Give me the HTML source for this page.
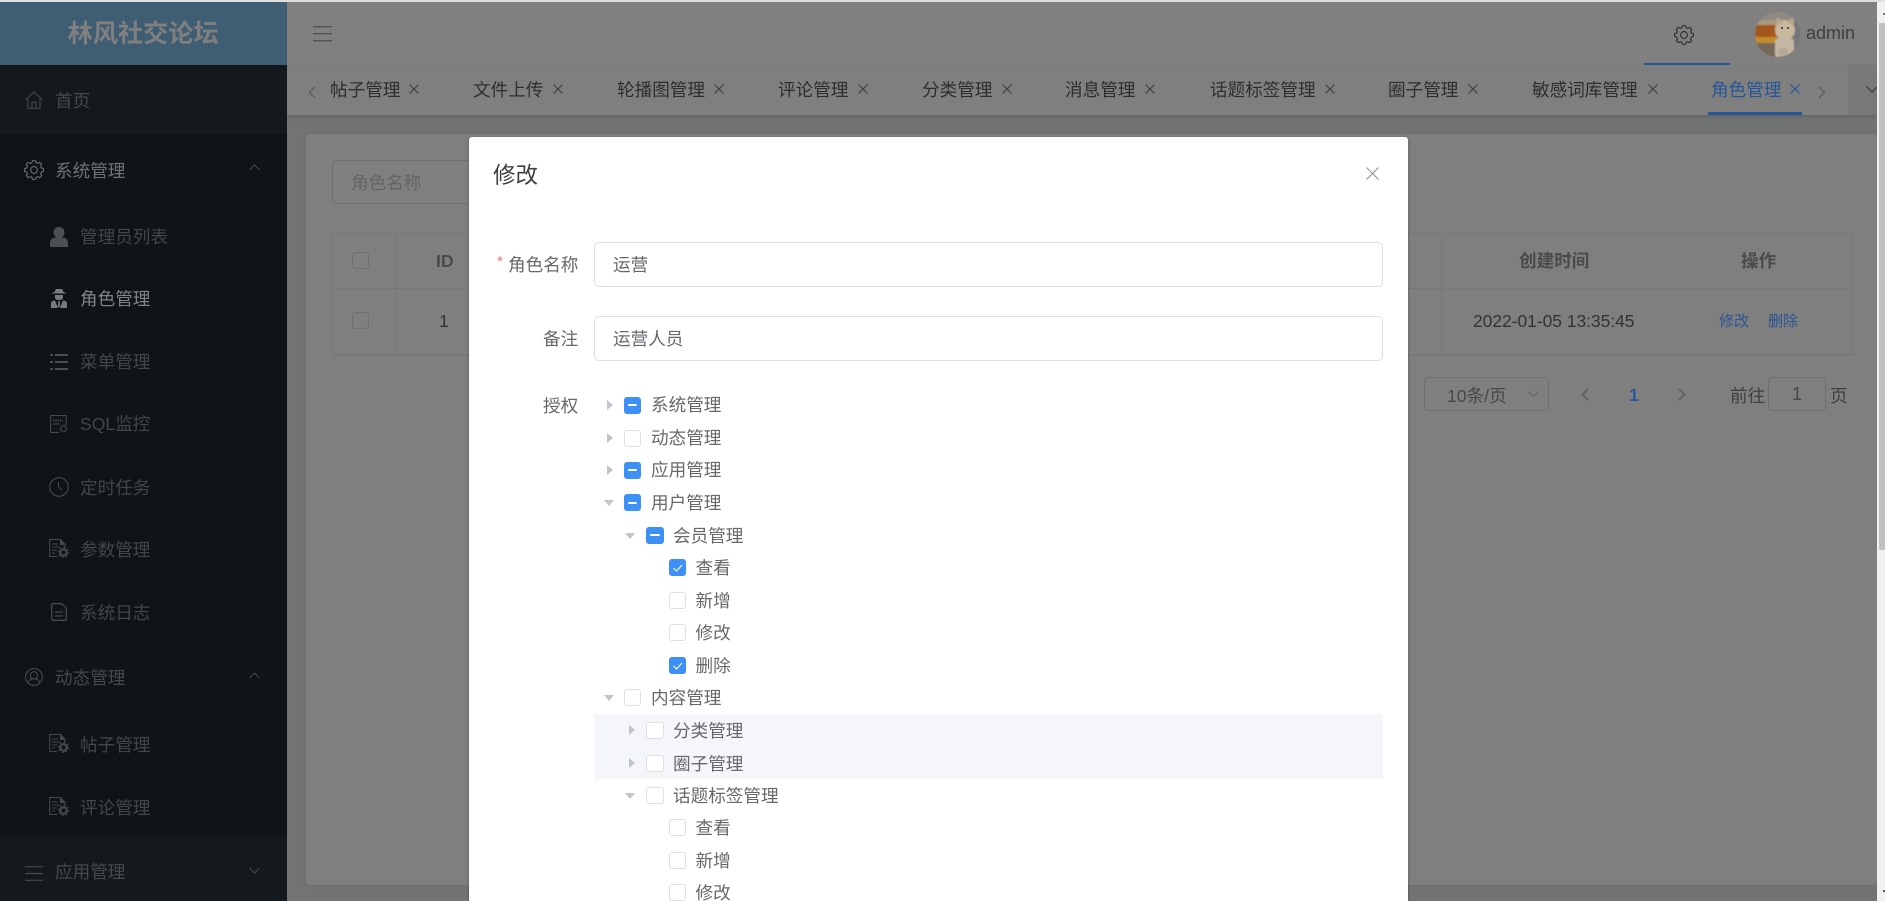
<!DOCTYPE html>
<html lang="zh"><head><meta charset="utf-8"><title>角色管理</title>
<style>
html,body{margin:0;padding:0;width:1885px;height:901px;overflow:hidden;background:#7f7f7f}
body{position:relative;font-family:"Liberation Sans","Noto Sans CJK SC",sans-serif;font-size:17.6px}
.a{position:absolute;box-sizing:border-box}
.t{position:absolute;white-space:nowrap;line-height:24px;height:24px;margin-top:-11px}
svg{position:absolute;overflow:visible}
.m{color:#44494d}
.n{color:#40464a}
.tab{color:#2e2e2e;font-size:17.6px}
.x{stroke:#3d3d3d;stroke-width:1.1;fill:none}
.r{color:#66686c}
.cb{position:absolute;box-sizing:border-box;width:17px;height:17px;background:#fff;border:1.2px solid #dcdfe6;border-radius:3px;margin-top:-8.5px}
.cb.i{background:#3e90f7;border-color:#3e90f7}
.cb.i:after{content:"";position:absolute;left:3px;right:3px;top:6.5px;height:2px;background:#fff;border-radius:1px}
.cb.c{background:#3e90f7;border-color:#3e90f7}
.tr{position:absolute;width:0;height:0;border-left:6px solid #c0c4cc;border-top:5px solid transparent;border-bottom:5px solid transparent;margin-top:-5px}
.td{position:absolute;width:0;height:0;border-top:6px solid #c0c4cc;border-left:5px solid transparent;border-right:5px solid transparent;margin-top:-2px}
</style></head><body>
<svg width="0" height="0" style="position:absolute">
<defs>
<symbol id="docgear" viewBox="0 0 20 19"><path d="M16 9V5.5L11.5.5H.7v17H8" fill="none" stroke="#44494d" stroke-width="1.1"/><path d="M11 .5V6h5z" fill="#44494d"/><path d="M3 5h6M3 8h8M3 11h5M3 14h3" stroke="#44494d" stroke-width="1.1"/><circle cx="14.5" cy="13.5" r="3.2" fill="none" stroke="#44494d" stroke-width="2.2"/><circle cx="14.5" cy="13.5" r="5" fill="none" stroke="#44494d" stroke-width="1.4" stroke-dasharray="1.8 2.1"/></symbol>
<symbol id="gear" viewBox="0 0 20 20"><g transform="translate(10,10)" fill="none" stroke="currentColor" stroke-width="1.1" stroke-linejoin="round"><path d="M9.38 -1.49L9.38 1.49L7.31 2.09L6.65 3.68L7.69 5.58L5.58 7.69L3.68 6.65L2.09 7.31L1.49 9.38L-1.49 9.38L-2.09 7.31L-3.68 6.65L-5.58 7.69L-7.69 5.58L-6.65 3.68L-7.31 2.09L-9.38 1.49L-9.38 -1.49L-7.31 -2.09L-6.65 -3.68L-7.69 -5.58L-5.58 -7.69L-3.68 -6.65L-2.09 -7.31L-1.49 -9.38L1.49 -9.38L2.09 -7.31L3.68 -6.65L5.58 -7.69L7.69 -5.58L6.65 -3.68L7.31 -2.09Z"/><circle r="3.4"/></g></symbol>
</defs></svg>

<!-- top strip -->
<div class="a" style="left:0;top:0;width:1885px;height:2px;background:#dedede"></div>
<!-- header -->
<div class="a" style="left:287px;top:2px;width:1590px;height:63px;background:#808080"></div>
<svg style="left:313px;top:26px" width="20" height="16"><path d="M0 .7h19M0 7.7h19M0 14.7h19" stroke="#525252" stroke-width="1.4"/></svg>
<svg style="left:1674px;top:25px;color:#2c2c2c" width="20" height="20"><use href="#gear" width="20" height="20"/></svg>
<div class="a" style="left:1644px;top:63px;width:86px;height:2px;background:#26559a"></div>
<svg style="left:1755px;top:12px" width="45" height="45" viewBox="0 0 45 45"><defs><clipPath id="av"><circle cx="22.5" cy="22.5" r="22.5"/></clipPath><filter id="bl"><feGaussianBlur stdDeviation="0.7"/></filter></defs><g clip-path="url(#av)"><g filter="url(#bl)"><rect x="-2" y="-2" width="49" height="49" fill="#8a8072"/><rect x="0" y="0" width="45" height="9" fill="#8d8a84"/><rect x="38" y="6" width="9" height="32" fill="#72767c"/><rect x="0" y="8" width="22" height="5" fill="#a99a7c"/><rect x="0" y="13" width="22" height="12" fill="#a5561b"/><rect x="0" y="25" width="22" height="6" fill="#c28c2a"/><rect x="0" y="31" width="22" height="14" fill="#75695a"/><ellipse cx="30" cy="18" rx="10" ry="10" fill="#c8b8a0"/><path d="M20 14l2-9 6 5zM32 10l7-5 0 10z" fill="#bfa688"/><path d="M20 45V28c2-3 16-3 19 0v17z" fill="#c4b6a2"/><ellipse cx="28" cy="40" rx="5" ry="4" fill="#b2a896"/></g><circle cx="27" cy="16" r="1" fill="#333"/><circle cx="33" cy="16" r="1" fill="#333"/></g></svg>
<div class="t" style="left:1806px;top:32px;font-size:18px;color:#3f3f3f">admin</div>

<!-- content bg -->
<div class="a" style="left:287px;top:115px;width:1590px;height:786px;background:#717473"></div>
<div class="a" style="left:306px;top:134px;width:1571px;height:751px;background:#7f7f7f;border-radius:4px;box-shadow:0 0 6px rgba(0,0,0,.05)"></div>

<!-- tabs -->
<div class="a" style="left:287px;top:65px;width:1590px;height:50px;background:#7f7f7f;box-shadow:0 2px 4px rgba(0,0,0,.14)"></div>
<div class="a" style="left:1848px;top:65px;width:29px;height:50px;background:#767879"></div>
<svg style="left:308px;top:86px" width="8" height="13"><path d="M7 1L1.5 6.5 7 12" class="x" style="stroke:#555"/></svg>
<div class="t tab" style="left:330px;top:89px">帖子管理</div>
<svg style="left:409px;top:84px" width="10" height="10"><path d="M.5.5l9 9M9.5.5l-9 9" class="x"/></svg>
<div class="t tab" style="left:473px;top:89px">文件上传</div>
<svg style="left:553px;top:84px" width="10" height="10"><path d="M.5.5l9 9M9.5.5l-9 9" class="x"/></svg>
<div class="t tab" style="left:617px;top:89px">轮播图管理</div>
<svg style="left:714px;top:84px" width="10" height="10"><path d="M.5.5l9 9M9.5.5l-9 9" class="x"/></svg>
<div class="t tab" style="left:778px;top:89px">评论管理</div>
<svg style="left:858px;top:84px" width="10" height="10"><path d="M.5.5l9 9M9.5.5l-9 9" class="x"/></svg>
<div class="t tab" style="left:922px;top:89px">分类管理</div>
<svg style="left:1002px;top:84px" width="10" height="10"><path d="M.5.5l9 9M9.5.5l-9 9" class="x"/></svg>
<div class="t tab" style="left:1065px;top:89px">消息管理</div>
<svg style="left:1145px;top:84px" width="10" height="10"><path d="M.5.5l9 9M9.5.5l-9 9" class="x"/></svg>
<div class="t tab" style="left:1210px;top:89px">话题标签管理</div>
<svg style="left:1325px;top:84px" width="10" height="10"><path d="M.5.5l9 9M9.5.5l-9 9" class="x"/></svg>
<div class="t tab" style="left:1388px;top:89px">圈子管理</div>
<svg style="left:1468px;top:84px" width="10" height="10"><path d="M.5.5l9 9M9.5.5l-9 9" class="x"/></svg>
<div class="t tab" style="left:1532px;top:89px">敏感词库管理</div>
<svg style="left:1648px;top:84px" width="10" height="10"><path d="M.5.5l9 9M9.5.5l-9 9" class="x"/></svg>
<div class="t tab" style="left:1711px;top:89px;color:#26559a">角色管理</div>
<svg style="left:1790px;top:84px" width="10" height="10"><path d="M.5.5l9 9M9.5.5l-9 9" class="x" style="stroke:#26559a"/></svg>
<div class="a" style="left:1708px;top:112px;width:94px;height:3px;background:#26559a"></div>
<svg style="left:1818px;top:86px" width="8" height="13"><path d="M1 1l5.5 5.5L1 12" class="x" style="stroke:#555"/></svg>
<svg style="left:1866px;top:86px" width="11" height="8"><path d="M.5.5L6 6l5-5" class="x" style="stroke:#333"/></svg>

<!-- search -->
<div class="a" style="left:332px;top:160px;width:160px;height:44px;border:1px solid #6e7072;border-radius:5px"></div>
<div class="t" style="left:351px;top:182px;color:#646464">角色名称</div>

<!-- table -->
<div class="a" style="left:332px;top:233px;width:1521px;height:123px;border:1px solid #76787c;border-bottom-width:2px"></div>
<div class="a" style="left:332px;top:288px;width:1521px;height:1px;background:#76787c"></div>
<div class="a" style="left:395px;top:233px;width:1px;height:122px;background:#76787c"></div>
<div class="a" style="left:1441px;top:233px;width:1px;height:122px;background:#76787c"></div>
<div class="a" style="left:352px;top:252px;width:17px;height:17px;border:1px solid #6e7072;border-radius:3px"></div>
<div class="a" style="left:352px;top:312px;width:17px;height:17px;border:1px solid #6e7072;border-radius:3px"></div>
<div class="t" style="left:436px;top:260px;font-weight:bold;color:#4a4a4a">ID</div>
<div class="t" style="left:439px;top:320px;color:#333">1</div>
<div class="t" style="left:1519px;top:260px;font-weight:bold;color:#4a4a4a">创建时间</div>
<div class="t" style="left:1741px;top:260px;font-weight:bold;color:#4a4a4a">操作</div>
<div class="t" style="left:1473px;top:320px;color:#333;font-size:17.4px">2022-01-05 13:35:45</div>
<div class="t" style="left:1719px;top:321px;font-size:15px;color:#2b5494">修改</div>
<div class="t" style="left:1768px;top:321px;font-size:15px;color:#2b5494">删除</div>

<!-- pagination -->
<div class="a" style="left:1424px;top:377px;width:125px;height:34px;border:1px solid #6e7072;border-radius:4px"></div>
<div class="t" style="left:1447px;top:395px;color:#484848">10条/页</div>
<svg style="left:1528px;top:391px" width="11" height="7"><path d="M.5.5L5.5 5.5 10.5 .5" class="x" style="stroke:#666"/></svg>
<svg style="left:1581px;top:388px" width="8" height="13"><path d="M7 1L1.5 6.5 7 12" fill="none" stroke="#5e5e5e" stroke-width="1.6"/></svg>
<div class="t" style="left:1629px;top:394px;font-weight:bold;color:#26559a">1</div>
<svg style="left:1678px;top:388px" width="8" height="13"><path d="M1 1l5.5 5.5L1 12" fill="none" stroke="#5e5e5e" stroke-width="1.6"/></svg>
<div class="t" style="left:1730px;top:395px;color:#3f3f3f">前往</div>
<div class="a" style="left:1768px;top:377px;width:58px;height:34px;border:1px solid #6e7072;border-radius:4px"></div>
<div class="t" style="left:1792px;top:393px;color:#484848;font-size:18px">1</div>
<div class="t" style="left:1830px;top:395px;color:#3f3f3f">页</div>

<!-- sidebar -->
<div class="a" style="left:0;top:2px;width:287px;height:63px;background:#3f5d73"></div>
<div class="t" style="left:67.5px;top:33px;font-size:25.2px;font-weight:bold;color:#7f7f7f">林风社交论坛</div>
<div class="a" style="left:0;top:65px;width:287px;height:836px;background:#0e1417"></div>
<div class="a" style="left:0;top:65px;width:287px;height:69px;background:#13191d"></div>
<div class="a" style="left:0;top:837px;width:287px;height:64px;background:#13191d"></div>

<svg style="left:25px;top:91px" width="18" height="18" viewBox="0 0 18 18"><path d="M.5 9L9 1l8.5 8M3 7.5V17.3h12V7.5M7 17.3v-6h4v6" fill="none" stroke="#44494d" stroke-width="1.1"/></svg>
<div class="t m" style="left:55px;top:100px">首页</div>

<svg style="left:24px;top:160px;color:#6a6f73" width="20" height="20"><use href="#gear" width="20" height="20"/></svg>
<div class="t" style="left:55px;top:170px;color:#6c7276">系统管理</div>
<svg style="left:249px;top:164px" width="11" height="7"><path d="M.5 6L5.5 1l5 5" fill="none" stroke="#44494d" stroke-width="1"/></svg>

<svg style="left:50px;top:227px" width="18" height="20" viewBox="0 0 18 20"><circle cx="9" cy="5.5" r="5.5" fill="#4b5054"/><path d="M0 20v-4.5C0 12.5 3 10.5 5 10.5h8c2 0 5 2 5 5V20z" fill="#4b5054"/></svg>
<div class="t n" style="left:80px;top:236px">管理员列表</div>

<svg style="left:51px;top:289px" width="16" height="19" viewBox="0 0 16 19"><path d="M3.5 3L5 0h6l1.5 3L16 4.5H0z" fill="#787c80"/><path d="M4 6h8v2.5C12 10.500 10 11 8 11s-4-.5-4-2.500z" fill="#787c80"/><path d="M0 19v-4.500C0 12.500 2 11.500 4 11.500l3 7.500h2l3-7.500c2 0 4 1 4 3V19z" fill="#787c80"/><path d="M7.300 12h1.400l.5 6H6.800z" fill="#787c80"/></svg>
<div class="t" style="left:80px;top:298px;color:#7f8488">角色管理</div>

<svg style="left:50px;top:354px" width="18" height="16" viewBox="0 0 18 16"><path d="M0 1h3M5 1h13M0 8h3M5 8h13M0 15h3M5 15h13" stroke="#4b5054" stroke-width="2"/></svg>
<div class="t n" style="left:80px;top:361px">菜单管理</div>

<svg style="left:50px;top:415px" width="18" height="18" viewBox="0 0 18 18"><path d="M9 17.400H.6V.6h15.600V10" fill="none" stroke="#44494d" stroke-width="1.100"/><path d="M3 5.500h10M3 9h7" stroke="#44494d" stroke-width="1.800" stroke-dasharray="1.500 .8"/><circle cx="13.500" cy="13.500" r="3" fill="none" stroke="#44494d" stroke-width="1.800" stroke-dasharray="1.500 .8"/></svg>
<div class="t n" style="left:80px;top:423px">SQL监控</div>

<svg style="left:49px;top:477px" width="20" height="20" viewBox="0 0 20 20"><circle cx="10" cy="10" r="9.300" fill="none" stroke="#44494d" stroke-width="1.100"/><path d="M9.500 5v5l3.500 3" fill="none" stroke="#44494d" stroke-width="1.100"/></svg>
<div class="t n" style="left:80px;top:487px">定时任务</div>

<svg style="left:49px;top:539px" width="20" height="19"><use href="#docgear"/></svg>
<div class="t n" style="left:80px;top:549px">参数管理</div>

<svg style="left:51px;top:603px" width="16" height="18" viewBox="0 0 16 18"><path d="M1.500.7h9L15.300 5v10.800a1.500 1.500 0 0 1-1.500 1.500H2.200A1.500 1.500 0 0 1 .7 15.800V2.200A1.500 1.500 0 0 1 1.500.7z" fill="none" stroke="#44494d" stroke-width="1.300"/><path d="M4 9h8M4 13h8" stroke="#44494d" stroke-width="1.300"/></svg>
<div class="t n" style="left:80px;top:612px">系统日志</div>

<svg style="left:25px;top:668px" width="18" height="18" viewBox="0 0 18 18"><circle cx="9" cy="9" r="8.400" fill="none" stroke="#44494d" stroke-width="1.100"/><circle cx="9" cy="7.300" r="3.600" fill="none" stroke="#44494d" stroke-width="1.100"/><path d="M3 15c1-3.500 3.500-4.300 6-4.300s5 .8 6 4.300" fill="none" stroke="#44494d" stroke-width="1.100"/></svg>
<div class="t m" style="left:55px;top:677px">动态管理</div>
<svg style="left:249px;top:672px" width="11" height="7"><path d="M.5 6L5.500 1l5 5" fill="none" stroke="#44494d" stroke-width="1"/></svg>

<svg style="left:49px;top:734px" width="20" height="19"><use href="#docgear"/></svg>
<div class="t n" style="left:80px;top:743.500px">帖子管理</div>
<svg style="left:49px;top:797px" width="20" height="19"><use href="#docgear"/></svg>
<div class="t n" style="left:80px;top:806.500px">评论管理</div>

<svg style="left:25px;top:866px" width="18" height="15"><path d="M0 .7h18M0 7.500h18M0 14.300h18" stroke="#44494d" stroke-width="1.200"/></svg>
<div class="t m" style="left:55px;top:871px">应用管理</div>
<svg style="left:249px;top:867px" width="11" height="7"><path d="M.5 1L5.500 6l5-5" fill="none" stroke="#44494d" stroke-width="1"/></svg>

<!-- scrollbar -->
<div class="a" style="left:1877px;top:2px;width:8px;height:899px;background:#f1f1f1"></div>
<div class="a" style="left:1879px;top:23px;width:6px;height:527px;background:#c1c1c1"></div>
<div class="a" style="left:1883px;top:13px;width:2px;height:2px;background:#777"></div>
<div class="a" style="left:1883px;top:890px;width:2px;height:2px;background:#555"></div>

<!-- modal -->
<div class="a" style="left:469px;top:137px;width:939px;height:764px;background:#fff;border-radius:3px 3px 0 0;box-shadow:0 1px 3px rgba(0,0,0,.3)"></div>
<div class="t" style="left:493px;top:175px;font-size:22.5px;color:#3c3e41">修改</div>
<svg style="left:1366px;top:167px" width="13" height="13"><path d="M.5.5l12 12M12.500.5l-12 12" fill="none" stroke="#909399" stroke-width="1.100"/></svg>

<div class="t" style="left:497px;top:261px;color:#f56c6c;font-size:15px">*</div>
<div class="t r" style="left:508px;top:264px">角色名称</div>
<div class="a" style="left:594px;top:242px;width:789px;height:45px;border:1.200px solid #dcdfe6;border-radius:5px"></div>
<div class="t r" style="left:613px;top:264px">运营</div>
<div class="t r" style="left:543px;top:338px">备注</div>
<div class="a" style="left:594px;top:316px;width:789px;height:45px;border:1.200px solid #dcdfe6;border-radius:5px"></div>
<div class="t r" style="left:613px;top:338px">运营人员</div>
<div class="t r" style="left:543px;top:405px">授权</div>

<!-- tree -->
<div class="a" style="left:594px;top:714px;width:789px;height:65px;background:#f4f6fa"></div>

<div class="tr" style="left:607px;top:405px"></div><div class="cb i" style="left:624px;top:405px"></div><div class="t r" style="left:651px;top:404px">系统管理</div>
<div class="tr" style="left:607px;top:438px"></div><div class="cb" style="left:624px;top:438px"></div><div class="t r" style="left:651px;top:437px">动态管理</div>
<div class="tr" style="left:607px;top:470px"></div><div class="cb i" style="left:624px;top:470px"></div><div class="t r" style="left:651px;top:469px">应用管理</div>
<div class="td" style="left:604px;top:502px"></div><div class="cb i" style="left:624px;top:502.500px"></div><div class="t r" style="left:651px;top:502px">用户管理</div>
<div class="td" style="left:625px;top:535px"></div><div class="cb i" style="left:646px;top:535px;width:18px"></div><div class="t r" style="left:673px;top:534.500px">会员管理</div>

<div class="cb c" style="left:669px;top:567.500px"><svg style="left:3px;top:4px" width="10" height="8"><path d="M.5 4L3.500 7 9 1" fill="none" stroke="#fff" stroke-width="1.100"/></svg></div><div class="t r" style="left:695.500px;top:567px">查看</div>
<div class="cb" style="left:669px;top:600px"></div><div class="t r" style="left:695.500px;top:599.500px">新增</div>
<div class="cb" style="left:669px;top:632.500px"></div><div class="t r" style="left:695.500px;top:632px">修改</div>
<div class="cb c" style="left:669px;top:665px"><svg style="left:3px;top:4px" width="10" height="8"><path d="M.5 4L3.500 7 9 1" fill="none" stroke="#fff" stroke-width="1.100"/></svg></div><div class="t r" style="left:695.500px;top:664.500px">删除</div>

<div class="td" style="left:604px;top:697px"></div><div class="cb" style="left:624px;top:697.500px"></div><div class="t r" style="left:651px;top:697px">内容管理</div>
<div class="tr" style="left:629px;top:730px"></div><div class="cb" style="left:646px;top:730px;width:18px"></div><div class="t r" style="left:673px;top:729.500px">分类管理</div>
<div class="tr" style="left:629px;top:763px"></div><div class="cb" style="left:646px;top:763px;width:18px"></div><div class="t r" style="left:673px;top:762.500px">圈子管理</div>
<div class="td" style="left:625px;top:795px"></div><div class="cb" style="left:646px;top:795px;width:18px"></div><div class="t r" style="left:673px;top:794.500px">话题标签管理</div>
<div class="cb" style="left:669px;top:827.500px"></div><div class="t r" style="left:695.500px;top:827px">查看</div>
<div class="cb" style="left:669px;top:860px"></div><div class="t r" style="left:695.500px;top:859.500px">新增</div>
<div class="cb" style="left:669px;top:892.500px"></div><div class="t r" style="left:695.500px;top:892px">修改</div>
</body></html>
